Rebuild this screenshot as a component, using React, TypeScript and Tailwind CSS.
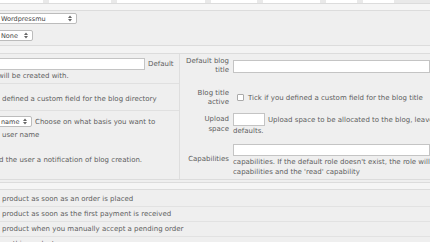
import React from "react";

const Updown = () => (
  <svg width="4" height="7" viewBox="0 0 4 7" className="shrink-0">
    <path d="M0 3 L2 0.5 L4 3 Z M0 4 L2 6.5 L4 4 Z" fill="#666" />
  </svg>
);

const Select = ({ label, width }: { label: string; width: string }) => (
  <div
    className={`flex items-center justify-between h-[11px] shrink-0 ${width} -ml-[3px] pl-[3px] pr-[4px] bg-white border border-[#bcbcbc] rounded-[2px] text-[6.5px] text-[#444]`}
  >
    <span>{label}</span>
    <Updown />
  </div>
);

const ListRow = ({ text }: { text: string }) => (
  <div className="h-[15px] flex items-center border-b border-[#e2e2e2] pl-[2px] whitespace-nowrap">
    {text}
  </div>
);

export default function App() {
  return (
    <div
      className="w-[430px] h-[242px] overflow-hidden bg-[#efefef] text-[7px] text-[#5e5e5e] leading-[10px]"
      style={{ fontFamily: '"DejaVu Sans", Verdana, sans-serif' }}
    >
      {/* tab strip */}
      <div className="flex h-[3px] gap-[6px] bg-[#e9e9e9]">
        <div className="w-[43px] bg-white" />
        <div className="w-[62px] bg-white" />
        <div className="w-[88px] bg-white" />
        <div className="w-[46px] bg-white" />
        <div className="w-[57px] bg-white" />
        <div className="w-[31px] bg-white" />
        <div className="w-[31px] bg-white" />
      </div>
      <div className="h-[8px] border-y border-[#dcdcdc] bg-[#f5f5f5]" />

      {/* selects */}
      <div className="flex flex-col gap-[6px] pt-[2px] pb-[4px]">
        <Select label="Wordpressmu" width="w-[80px]" />
        <Select label="None" width="w-[36px]" />
      </div>

      <div className="h-[9px] border-y border-[#dcdcdc] bg-[#f3f3f3]" />

      {/* form table */}
      <div className="flex h-[126px] border-b border-[#dcdcdc]">
        <div className="w-[180px] shrink-0 flex flex-col border-r border-[#dedede] whitespace-nowrap">
          <div className="h-[30px] border-b border-[#e0e0e0] pt-[4px]">
            <div className="flex items-center gap-[3px]">
              <div className="w-[146px] h-[12px] -ml-[1px] shrink-0 bg-white border border-[#c4c4c4]" />
              <span>Default</span>
            </div>
            <div className="-ml-[2px] mt-[1px]">will be created with.</div>
          </div>
          <div className="h-[27px] border-b border-[#e0e0e0] flex items-center pl-[2px] pt-[3px]">
            defined a custom field for the blog directory
          </div>
          <div className="h-[33px] pt-[5px]">
            <div className="flex items-center gap-[3px]">
              <Select label="name" width="w-[35px]" />
              <span>Choose on what basis you want to</span>
            </div>
            <div className="pl-[2px] mt-[3px]">user name</div>
          </div>
          <div className="flex-1 flex items-center -ml-[1px] pb-[4px]">
            d the user a notification of blog creation.
          </div>
        </div>

        <div className="flex-1 min-w-0 flex flex-col whitespace-nowrap">
          <div className="h-[30px] flex items-start pt-[3px]">
            <div className="w-[53px] shrink-0 pr-[4px] text-right leading-[9px]">
              Default blog
              <br />
              title
            </div>
            <div className="flex-1 h-[13px] mt-[3px] bg-white border border-[#c4c4c4]" />
          </div>
          <div className="h-[27px] flex items-center">
            <div className="w-[53px] shrink-0 pr-[4px] text-right leading-[9px]">
              Blog title
              <br />
              active
            </div>
            <div className="w-[7px] h-[7px] shrink-0 mx-[4px] bg-white border border-[#aaa] rounded-[1px]" />
            <span>Tick if you defined a custom field for the blog title</span>
          </div>
          <div className="h-[33px] flex items-start pt-[2px]">
            <div className="w-[53px] shrink-0 pr-[4px] text-right leading-[10px] pt-[1px]">
              Upload
              <br />
              space
            </div>
            <div className="flex-1 min-w-0">
              <div className="flex items-center gap-[3px]">
                <div className="w-[32px] h-[13px] shrink-0 bg-white border border-[#c4c4c4]" />
                <span>Upload space to be allocated to the blog, leave empty for</span>
              </div>
              <div>defaults.</div>
            </div>
          </div>
          <div className="flex-1 flex items-start">
            <div className="w-[53px] shrink-0 pr-[4px] text-right pt-[10px]">Capabilities</div>
            <div className="flex-1 min-w-0">
              <div className="h-[12px] bg-white border border-[#c4c4c4]" />
              <div className="mt-[1px]">
                capabilities. If the default role doesn't exist, the role will
              </div>
              <div>capabilities and the 'read' capability</div>
            </div>
          </div>
        </div>
      </div>

      <div className="h-[8px] mt-[2px] border-y border-[#dcdcdc] bg-[#f5f5f5]" />

      {/* payment options */}
      <div className="flex flex-col pt-[2px]">
        <ListRow text="product as soon as an order is placed" />
        <ListRow text="product as soon as the first payment is received" />
        <ListRow text="product when you manually accept a pending order" />
        <ListRow text="ve this product" />
      </div>
    </div>
  );
}
